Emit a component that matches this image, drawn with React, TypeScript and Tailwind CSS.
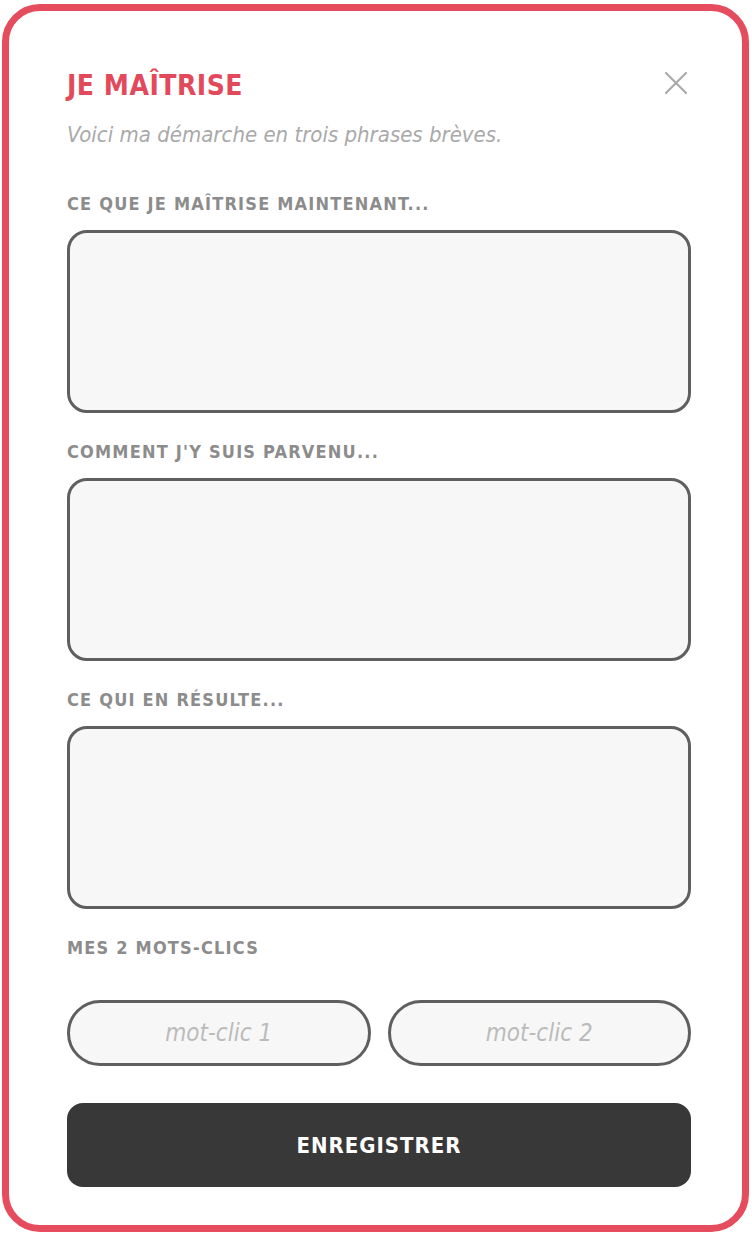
import React from "react";

const font = { fontFamily: '"Trebuchet MS", "DejaVu Sans Condensed", "DejaVu Sans", sans-serif' };

function Label({ children }: { children: React.ReactNode }) {
  return (
    <div className="text-[18px] leading-[22px] font-bold tracking-[1.2px] text-[#8c8c8c]">{children}</div>
  );
}

function Area() {
  return (
    <textarea className="mt-[15px] block w-full h-[183px] resize-none rounded-[20px] border-[3px] border-[#5f5f5f] bg-[#f7f7f7] outline-none" />
  );
}

export default function App() {
  return (
    <div className="w-[752px] h-[1236px] bg-white pt-[4px] pl-[2px]" style={font}>
      <div className="w-[747px] h-[1228px] rounded-[38px] border-[7px] border-[#e54c5d] bg-white pl-[58px] pr-[51px] pt-[57px]">
        <div className="flex items-start justify-between">
          <h1 className="text-[28px] leading-[36px] font-bold text-[#e24a5c] tracking-[0.5px]">JE MAÎTRISE</h1>
          <svg className="mt-[3px] mr-[3px]" width="24" height="24" viewBox="0 0 24 24" fill="none" stroke="#aaaaaa" strokeWidth="2.2" strokeLinecap="round">
            <path d="M2 2 L22 22 M22 2 L2 22" />
          </svg>
        </div>
        <p className="mt-[18px] text-[22px] leading-[26px] italic text-[#a9a9a9]">Voici ma démarche en trois phrases brèves.</p>
        <div className="mt-[45px]">
          <Label>CE QUE JE MAÎTRISE MAINTENANT...</Label>
          <Area />
        </div>
        <div className="mt-[28px]">
          <Label>COMMENT J'Y SUIS PARVENU...</Label>
          <Area />
        </div>
        <div className="mt-[28px]">
          <Label>CE QUI EN RÉSULTE...</Label>
          <Area />
        </div>
        <div className="mt-[28px]">
          <Label>MES 2 MOTS-CLICS</Label>
        </div>
        <div className="mt-[41px] flex gap-[17px]">
          <input placeholder="mot-clic 1" className="w-0 flex-1 h-[66px] rounded-full border-[3px] border-[#5f5f5f] bg-[#f7f7f7] text-center text-[24px] italic outline-none placeholder:text-[#bbbbbb]" />
          <input placeholder="mot-clic 2" className="w-0 flex-1 h-[66px] rounded-full border-[3px] border-[#5f5f5f] bg-[#f7f7f7] text-center text-[24px] italic outline-none placeholder:text-[#bbbbbb]" />
        </div>
        <button className="mt-[37px] block w-full h-[84px] rounded-[16px] bg-[#383838] text-white text-[22px] font-bold tracking-[1px]">ENREGISTRER</button>
      </div>
    </div>
  );
}
